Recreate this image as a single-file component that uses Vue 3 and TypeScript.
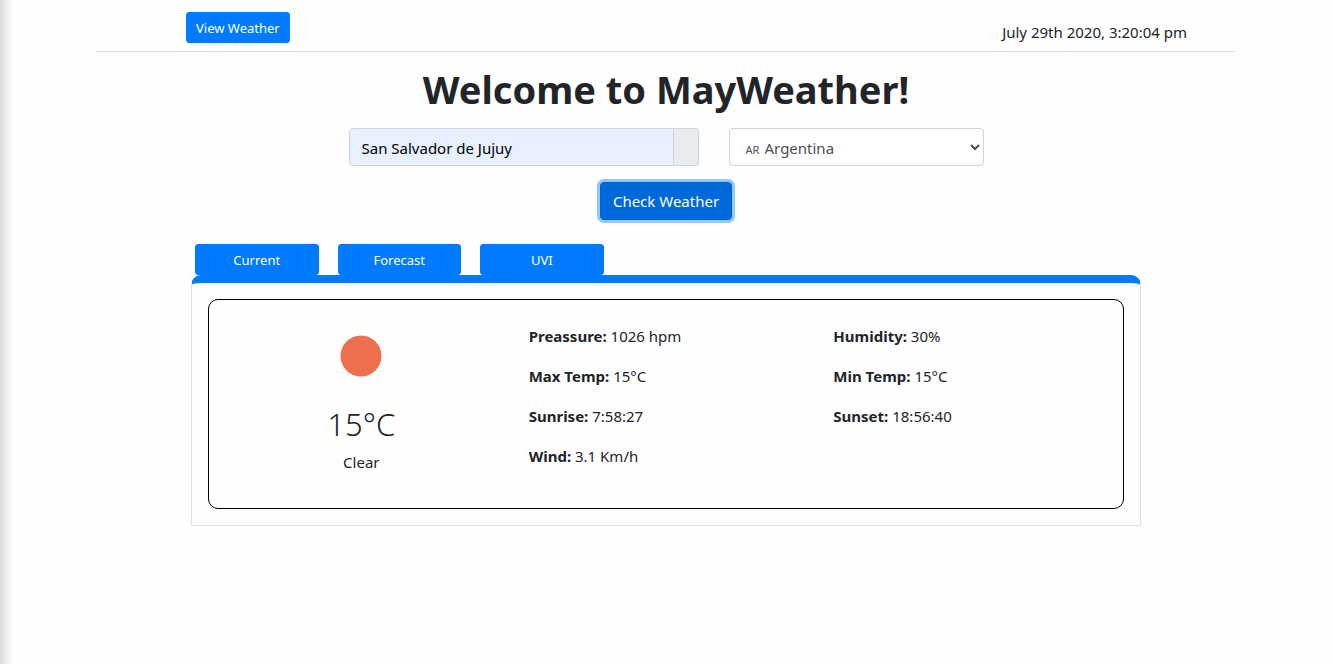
<script setup lang="ts">
import { ref } from 'vue'

interface Detail {
  label: string
  value: string
}

const city = ref('San Salvador de Jujuy')
const country = ref('AR')
const tabs: string[] = ['Current', 'Forecast', 'UVI']
const columns: Detail[][] = [
  [
    { label: 'Preassure:', value: '1026 hpm' },
    { label: 'Max Temp:', value: '15°C' },
    { label: 'Sunrise:', value: '7:58:27' },
    { label: 'Wind:', value: '3.1 Km/h' },
  ],
  [
    { label: 'Humidity:', value: '30%' },
    { label: 'Min Temp:', value: '15°C' },
    { label: 'Sunset:', value: '18:56:40' },
  ],
]
</script>

<template>
  <div class="page">
    <header class="topbar">
      <button type="button" class="btn btn-sm">View Weather</button>
      <time class="clock" datetime="2020-07-29T15:20:04">July 29th 2020, 3:20:04 pm</time>
    </header>

    <main>
      <h1>Welcome to MayWeather!</h1>

      <form class="search" @submit.prevent>
        <div class="fields">
          <div class="city">
            <input v-model="city" type="text" aria-label="City" />
            <span class="addon"></span>
          </div>
          <div class="country">
            <span class="code">{{ country }}</span>
            <select v-model="country" aria-label="Country">
              <option value="AR">Argentina</option>
            </select>
          </div>
        </div>
        <button type="submit" class="btn btn-check">Check Weather</button>
      </form>

      <section class="weather">
        <nav class="tabs">
          <button v-for="tab in tabs" :key="tab" type="button" class="btn btn-sm">{{ tab }}</button>
        </nav>
        <div class="panel">
          <div class="card">
            <div class="summary">
              <svg class="sun" viewBox="0 0 50 50" aria-hidden="true">
                <circle cx="25" cy="25" r="20.5" fill="#ee6f4e" />
              </svg>
              <p class="temp">15°C</p>
              <p class="sky">Clear</p>
            </div>
            <div v-for="(column, i) in columns" :key="i" class="details">
              <p v-for="item in column" :key="item.label">
                <strong>{{ item.label }}</strong> {{ item.value }}
              </p>
            </div>
          </div>
        </div>
      </section>
    </main>
  </div>
</template>

<style>
body {
  background: #fefefe;
}
</style>

<style scoped>
* {
  box-sizing: border-box;
}
.page {
  position: relative;
  min-height: 100vh;
  padding-right: 1px;
  color: #212529;
  font: 15px/24px "Noto Sans", "Open Sans", sans-serif;
}
.page::before {
  content: "";
  position: absolute;
  inset: 0 auto 0 0;
  width: 13px;
  background: linear-gradient(to right, #d9d9d9, #e9e9e9 40%, #fefefe);
}
p,
h1 {
  margin: 0;
}
.topbar {
  display: flex;
  justify-content: space-between;
  align-items: flex-start;
  max-width: 1140px;
  height: 52px;
  margin: 0 auto;
  padding: 12px 49px 0 90px;
  border-bottom: 1px solid #dee2e6;
}
.clock {
  padding-top: 8px;
}
.btn {
  border: 1px solid #007bff;
  border-radius: 4px;
  background: #007bff;
  color: #fff;
  font: inherit;
}
.btn-sm {
  height: 31px;
  padding: 2px 9px 0;
  border-radius: 3px;
  font-size: 13px;
  line-height: 21px;
}
h1 {
  padding-top: 13px;
  text-align: center;
  font-size: 38px;
  line-height: 48px;
  font-weight: 700;
}
.search {
  display: flex;
  flex-direction: column;
  align-items: center;
  gap: 16px;
  margin-top: 15px;
}
.fields {
  display: grid;
  grid-template-columns: 350fr 255fr;
  gap: 30px;
  width: 100%;
  max-width: 635px;
}
.city {
  display: flex;
  height: 38px;
}
.city input {
  flex: 1;
  min-width: 0;
  padding: 2px 12px 0;
  border: 1px solid #ced4da;
  border-radius: 4px 0 0 4px;
  background: #e8f0fe;
  color: #000;
  font: inherit;
}
.addon {
  width: 25px;
  border: 1px solid #ced4da;
  border-left: 0;
  border-radius: 0 4px 4px 0;
  background: #e9ecef;
}
.country {
  position: relative;
}
.country select {
  width: 100%;
  height: 38px;
  padding: 2px 0 0 31px;
  border: 1px solid #ced4da;
  border-radius: 4px;
  background: #fff;
  color: #495057;
  font: inherit;
}
.code {
  position: absolute;
  left: 17px;
  top: 10px;
  color: #495057;
  font-size: 11px;
  pointer-events: none;
}
.btn-check {
  height: 38px;
  padding: 0 12px;
  border-color: #0062cc;
  background: #0069d9;
  box-shadow: 0 0 0 3px rgba(38, 143, 255, 0.5);
}
.weather {
  width: 100%;
  max-width: 950px;
  margin: 24px auto 0;
}
.tabs {
  display: flex;
  gap: 2%;
  width: 100%;
  margin-left: 4px;
}
.tabs .btn {
  width: 13%;
}
.panel {
  padding: 16px;
  border: 1px solid #dee2e6;
  border-top: 8px solid #007bff;
  border-radius: 10px 10px 0 0;
}
.card {
  display: grid;
  grid-template-columns: repeat(3, 1fr);
  min-height: 210px;
  padding: 24px 0 8px;
  border: 1px solid #000;
  border-radius: 10px;
}
.summary {
  display: flex;
  flex-direction: column;
  align-items: center;
  padding-top: 7px;
}
.sun {
  width: 50px;
  height: 50px;
}
.temp {
  margin-top: 19px;
  font-size: 31px;
  line-height: 48px;
  font-weight: 300;
}
.sky {
  margin-top: 2px;
}
.details {
  display: flex;
  flex-direction: column;
  gap: 16px;
  padding: 0 15px;
}
</style>
